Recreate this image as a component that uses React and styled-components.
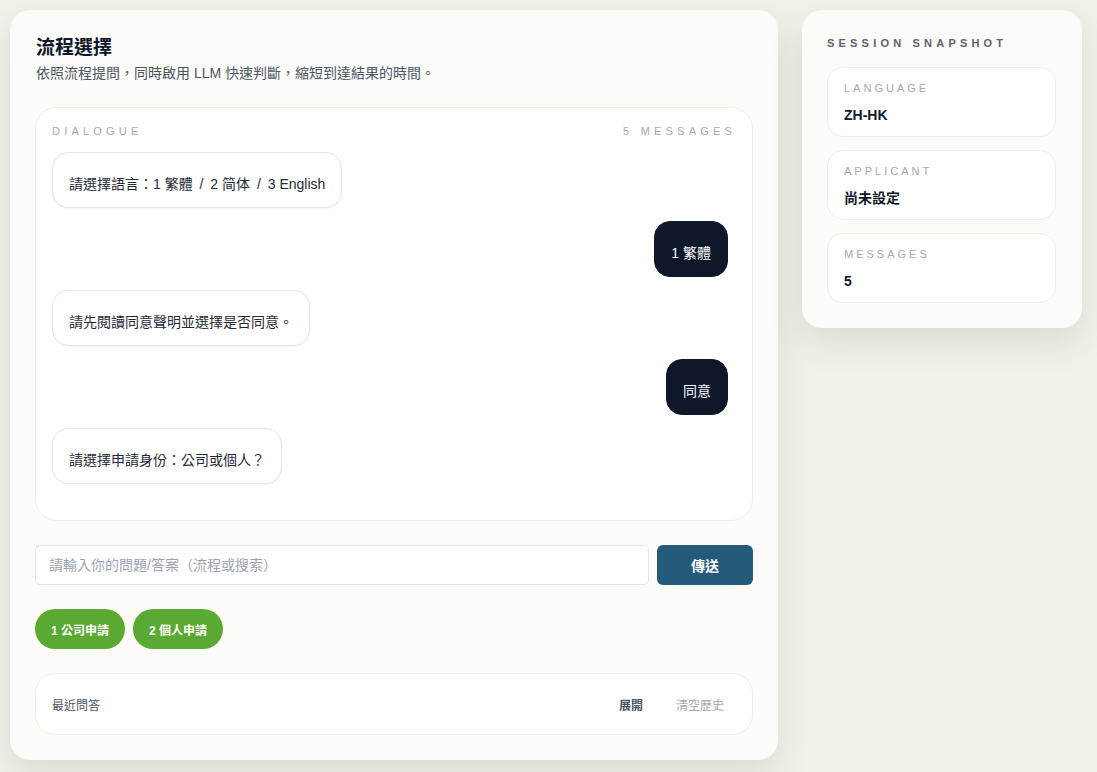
import React from "react";
import styled, { createGlobalStyle } from "styled-components";

const GlobalStyle = createGlobalStyle`
  html, body {
    margin: 0;
    padding: 0;
    background: #f3f1ea;
    font-family: "Liberation Sans", "Noto Sans CJK TC", Arial, sans-serif;
    color: #111827;
  }
  * { box-sizing: border-box; }
`;

const messages = [
  { from: "bot", text: "請選擇語言：1 繁體 / 2 简体 / 3 English" },
  { from: "user", text: "1 繁體" },
  { from: "bot", text: "請先閱讀同意聲明並選擇是否同意。" },
  { from: "user", text: "同意" },
  { from: "bot", text: "請選擇申請身份：公司或個人？" },
];

const snapshot = [
  { label: "LANGUAGE", value: "ZH-HK" },
  { label: "APPLICANT", value: "尚未設定" },
  { label: "MESSAGES", value: "5" },
];

// option separators get a little extra air, as in the design
const renderText = (text) =>
  text.split(" / ").map((part, i) => (
    <React.Fragment key={i}>
      {i > 0 && <Slash> / </Slash>}
      {part}
    </React.Fragment>
  ));

const App = () => {
  return (
    <>
      <GlobalStyle />
      <Page lang="zh-Hant">
        <MainCard>
          <Heading>
            <Title>流程選擇</Title>
            <Subtitle>依照流程提問，同時啟用 LLM 快速判斷，縮短到達結果的時間。</Subtitle>
          </Heading>

          <Dialogue>
            <DialogueHead>
              <Eyebrow>DIALOGUE</Eyebrow>
              <Eyebrow>5 MESSAGES</Eyebrow>
            </DialogueHead>
            <MessageList>
              {messages.map((m, i) => (
                <Bubble key={i} $user={m.from === "user"}>
                  {renderText(m.text)}
                </Bubble>
              ))}
            </MessageList>
          </Dialogue>

          <InputRow>
            <TextInput placeholder="請輸入你的問題/答案（流程或搜索）" />
            <SendButton>傳送</SendButton>
          </InputRow>

          <Chips>
            <Chip>1 公司申請</Chip>
            <Chip>2 個人申請</Chip>
          </Chips>

          <History>
            <HistoryLabel>最近問答</HistoryLabel>
            <HistoryActions>
              <HistoryLink $strong>展開</HistoryLink>
              <HistoryLink>清空歷史</HistoryLink>
            </HistoryActions>
          </History>
        </MainCard>

        <SideCard>
          <SideTitle>SESSION SNAPSHOT</SideTitle>
          {snapshot.map((s) => (
            <Stat key={s.label}>
              <StatLabel>{s.label}</StatLabel>
              <StatValue>{s.value}</StatValue>
            </Stat>
          ))}
        </SideCard>
      </Page>
    </>
  );
};

export default App;

const Page = styled.div`
  display: flex;
  align-items: flex-start;
  gap: 24px;
  padding: 10px;
  min-height: 100vh;
`;

const MainCard = styled.div`
  width: 768px;
  height: 750px;
  background: #fcfbf8;
  border-radius: 20px;
  padding: 26px 25px 25px;
  display: flex;
  flex-direction: column;
  gap: 24px;
  box-shadow: 0 14px 36px rgba(60, 50, 30, 0.12);
`;

const Heading = styled.div`
  display: flex;
  flex-direction: column;
  gap: 3px;
  padding-left: 1px;
`;

const Title = styled.h1`
  margin: 0;
  font-size: 19px;
  line-height: 24px;
  font-weight: 700;
  color: #0f172a;
`;

const Subtitle = styled.p`
  margin: 0;
  font-size: 14px;
  line-height: 20px;
  color: #4b5563;
`;

const Dialogue = styled.div`
  height: 414px;
  background: #ffffff;
  border: 1px solid #efede8;
  border-radius: 22px;
  padding: 15px 16px 0 16px;
  display: flex;
  flex-direction: column;
  gap: 13px;
`;

const DialogueHead = styled.div`
  display: flex;
  justify-content: space-between;
`;

const Eyebrow = styled.span`
  font-size: 11px;
  line-height: 16px;
  letter-spacing: 4.2px;
  color: #a3a8b3;
`;

const MessageList = styled.div`
  flex: 1;
  overflow: hidden;
  display: flex;
  flex-direction: column;
  gap: 13px;
  padding-right: 8px;
`;

const Bubble = styled.div`
  align-self: ${(p) => (p.$user ? "flex-end" : "flex-start")};
  background: ${(p) => (p.$user ? "#0f172a" : "#ffffff")};
  color: ${(p) => (p.$user ? "#f8fafc" : "#1f2937")};
  border: 1px solid ${(p) => (p.$user ? "#0f172a" : "#e7e5e0")};
  border-radius: 16px;
  padding: 22px 16px 14px;
  font-size: 14px;
  line-height: 18px;
  height: 56px;
  white-space: pre;
  text-spacing-trim: space-all;
  box-shadow: ${(p) => (p.$user ? "none" : "0 1px 2px rgba(0,0,0,0.04)")};
`;

const Slash = styled.span`
  margin: 0 3px;
`;

const InputRow = styled.div`
  display: flex;
  gap: 8px;
`;

const TextInput = styled.input`
  flex: 1;
  height: 40px;
  border: 1px solid #e2e4e8;
  border-radius: 5px;
  background: #ffffff;
  padding: 0 13px;
  font-family: inherit;
  font-size: 14px;
  color: #111827;
  outline: none;
  &::placeholder {
    color: #9ca3af;
  }
`;

const SendButton = styled.button`
  width: 96px;
  height: 40px;
  border: none;
  border-radius: 6px;
  background: #245b7b;
  color: #ffffff;
  font-family: inherit;
  font-size: 14px;
  font-weight: 700;
`;

const Chips = styled.div`
  display: flex;
  gap: 8px;
`;

const Chip = styled.button`
  height: 40px;
  padding: 0 16px;
  border: none;
  border-radius: 20px;
  background: #5aa932;
  color: #ffffff;
  font-family: inherit;
  font-size: 12px;
  font-weight: 600;
`;

const History = styled.div`
  height: 62px;
  background: #ffffff;
  border: 1px solid #efede8;
  border-radius: 20px;
  padding: 0 28px 0 16px;
  display: flex;
  align-items: center;
  justify-content: space-between;
`;

const HistoryLabel = styled.span`
  font-size: 12px;
  color: #4b5563;
`;

const HistoryActions = styled.div`
  display: flex;
  gap: 33px;
`;

const HistoryLink = styled.span`
  font-size: 12px;
  font-weight: ${(p) => (p.$strong ? 700 : 400)};
  color: ${(p) => (p.$strong ? "#4b5563" : "#a3a8b3")};
`;

const SideCard = styled.div`
  width: 280px;
  background: #fcfbf8;
  border-radius: 20px;
  padding: 25px 26px 25px 25px;
  display: flex;
  flex-direction: column;
  gap: 13px;
  box-shadow: 0 14px 36px rgba(60, 50, 30, 0.12);
`;

const SideTitle = styled.div`
  font-size: 11px;
  line-height: 16px;
  font-weight: 600;
  letter-spacing: 4.2px;
  color: #5b6270;
  margin-bottom: 3px;
`;

const Stat = styled.div`
  height: 70px;
  background: #ffffff;
  border: 1px solid #efede8;
  border-radius: 16px;
  padding: 13px 16px;
  display: flex;
  flex-direction: column;
  gap: 11px;
`;

const StatLabel = styled.span`
  font-size: 11px;
  line-height: 14px;
  letter-spacing: 3px;
  color: #a3a8b3;
`;

const StatValue = styled.span`
  font-size: 14px;
  line-height: 18px;
  font-weight: 600;
  color: #111827;
`;
